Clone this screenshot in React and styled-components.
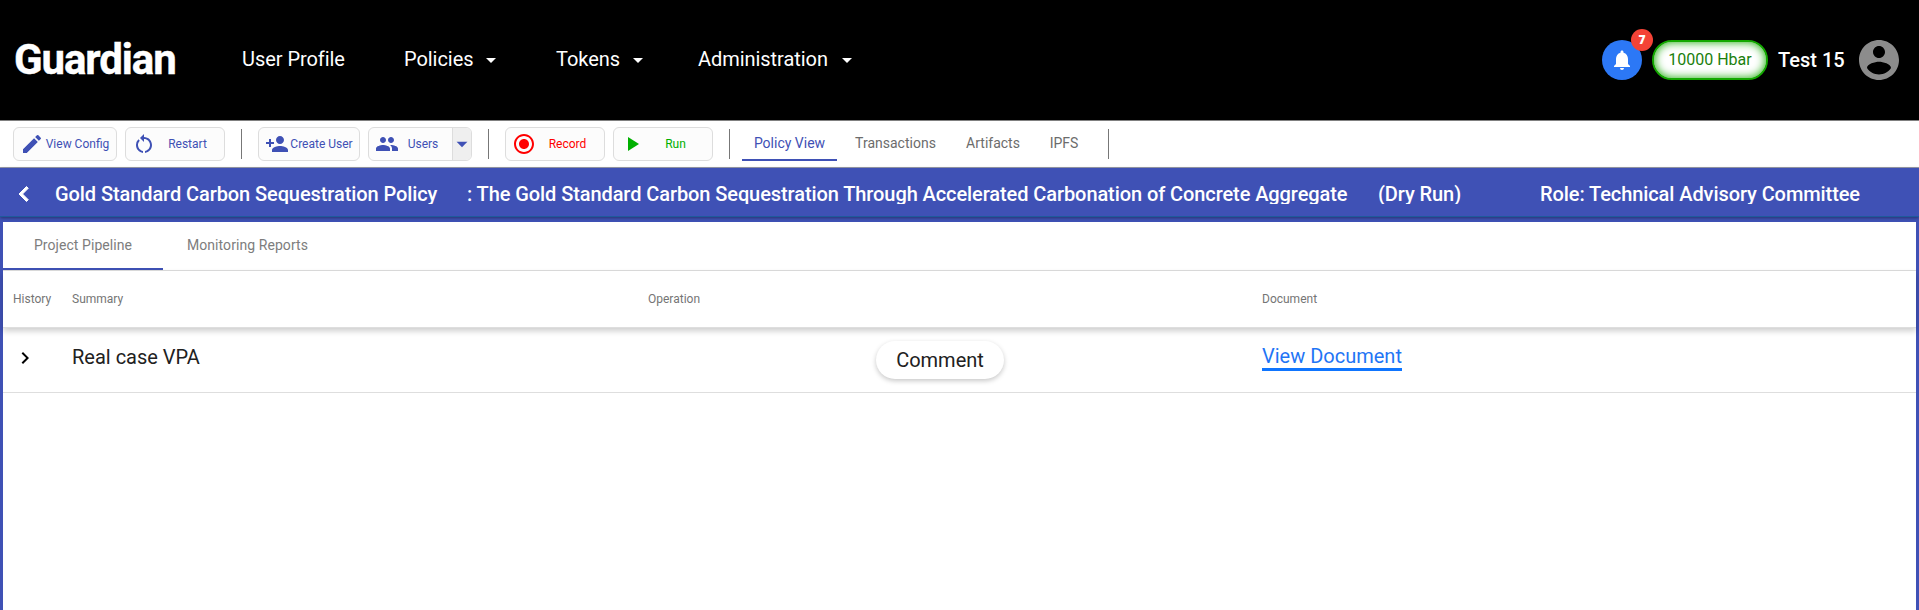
import React from "react";
import styled, { createGlobalStyle, css } from "styled-components";
import {
  MdEdit, MdRestartAlt, MdPersonAdd, MdGroup, MdRadioButtonChecked, MdPlayArrow,
  MdArrowDropDown, MdChevronLeft, MdChevronRight, MdNotifications,
} from "react-icons/md";

const indigo = "#3f51b5";

const GlobalStyle = createGlobalStyle`
  *, *::before, *::after { box-sizing: border-box; }
  body { margin: 0; background: #fff; font-family: Roboto, "Liberation Sans", sans-serif; overflow: hidden; }
  button { font-family: inherit; }
  svg { display: block; flex: none; }
`;

const Page = styled.div`
  display: flex;
  flex-direction: column;
  height: 610px;
`;

const Header = styled.header`
  display: flex;
  align-items: center;
  height: 120px;
  padding: 0 20px 0 14px;
  background: #000;
  color: #fff;
`;

const Logo = styled.div`
  width: 228px;
  padding-bottom: 1px;
  font-size: 42px;
  font-weight: 700;
  letter-spacing: -1.1px;
  line-height: 50px;
  -webkit-text-stroke: 0.4px #fff;
`;

const Nav = styled.nav`
  display: flex;
  flex: 1;
`;

const NavItem = styled.a`
  display: flex;
  align-items: center;
  justify-content: space-between;
  width: ${(p) => p.$width}px;
  margin-right: ${(p) => p.$after}px;
  font-size: 20px;
  line-height: 24px;
  letter-spacing: -0.05px;
  white-space: nowrap;
`;

const NavLabel = styled.span`
  padding-bottom: 2px;
`;

const Account = styled.div`
  display: flex;
  align-items: center;
`;

const Bell = styled.div`
  position: relative;
  display: flex;
  align-items: center;
  justify-content: center;
  width: 40px;
  height: 40px;
  margin-right: 10px;
  border-radius: 50%;
  background: #2c78f6;
`;

const Badge = styled.span`
  position: absolute;
  top: -11px;
  right: -11px;
  width: 22px;
  height: 22px;
  border-radius: 50%;
  background: #f44336;
  font-family: "Open Sans", Roboto, sans-serif;
  font-size: 12px;
  font-weight: 800;
  line-height: 22px;
  text-align: center;
`;

const Balance = styled.div`
  width: 116px;
  height: 40px;
  margin-right: 10px;
  border: 2px solid #13a800;
  border-radius: 20px;
  background: #fff;
  box-shadow: inset 0 0 10px 0 #13a800;
  color: #1a7f0c;
  font-size: 16px;
  line-height: 35px;
  text-align: center;
`;

const UserName = styled.div`
  width: 77px;
  font-size: 20px;
  font-weight: 500;
  line-height: 24px;
  white-space: nowrap;
`;

const Avatar = styled.div`
  display: flex;
  align-items: center;
  justify-content: center;
  width: 48px;
  height: 48px;
  margin-right: -4px;
  color: #8c8c8c;
`;

const Toolbar = styled.div`
  display: flex;
  align-items: center;
  height: 48px;
  padding-left: 13px;
  border-top: 1px solid #808080;
  border-bottom: 1px solid #9a9dac;
`;

const ToolButton = styled.button`
  display: flex;
  align-items: center;
  width: ${(p) => p.$width}px;
  height: 34px;
  margin-right: 8px;
  padding: 0 0 0 6px;
  border: 1px solid #ddd;
  border-radius: 6px;
  background: #fcfcfc;
  color: ${(p) => p.$color || indigo};
  font-size: 12px;
  overflow: hidden;
`;

const ToolLabel = styled.span`
  flex: 1;
  padding-right: 5px;
  text-align: center;
  white-space: nowrap;
`;

const SplitArrow = styled.span`
  display: flex;
  align-items: center;
  justify-content: center;
  width: 19px;
  height: 32px;
  border-left: 1px solid #ddd;
  background: #efefef;
`;

const ToolDivider = styled.div`
  width: 1px;
  height: 30px;
  margin: 0 ${(p) => p.$after ?? 16}px 0 ${(p) => p.$before ?? 8}px;
  background: #777;
`;

const ViewTabs = styled.div`
  display: flex;
  height: 34px;
`;

const ViewTab = styled.a`
  width: ${(p) => p.$width}px;
  height: 34px;
  padding-bottom: 2px;
  color: #6c6c6c;
  font-size: 14px;
  line-height: 32px;
  text-align: center;
  white-space: nowrap;
  ${(p) => p.$active && css`
    padding-bottom: 0;
    border-bottom: 2px solid ${indigo};
    color: ${indigo};
  `}
`;

const TitleBar = styled.div`
  position: relative;
  display: flex;
  align-items: center;
  height: 49px;
  padding-left: 9px;
  border-bottom: 1px solid #1e5a9c;
  background: ${indigo};
  box-shadow: 0 1px 3px rgba(0, 0, 0, 0.4);
  color: #fff;
`;

const TitleText = styled.span`
  width: ${(p) => p.$width}px;
  height: 20px;
  margin-top: 4px;
  overflow: hidden;
  font-size: 20px;
  font-weight: 500;
  line-height: 20px;
  letter-spacing: -0.085px;
  white-space: nowrap;
`;

const Back = styled.span`
  width: 46px;
  margin-top: 3px;

  path:last-child {
    stroke: #fff;
    stroke-width: 0.8px;
  }
`;

const Workspace = styled.main`
  display: flex;
  flex-direction: column;
  flex: 1;
  border: 3px solid ${indigo};
  border-top-width: 5px;
  border-bottom: 0;
  background: #fff;
`;

const TabStrip = styled.div`
  display: flex;
  height: 49px;
  border-bottom: 1px solid #dedede;
`;

const Tab = styled.a`
  width: ${(p) => p.$width}px;
  height: 48px;
  border-bottom: 2px solid ${(p) => (p.$active ? indigo : "transparent")};
  color: #7d7d7d;
  font-size: 14px;
  letter-spacing: 0.07px;
  line-height: 46px;
  text-align: center;
`;

const Row = styled.div`
  display: grid;
  grid-template-columns: 59px 576px 614px 1fr;
  align-items: center;
  height: 65px;
  padding-left: 10px;
  border-bottom: 1px solid #dedede;
  color: #212121;
  font-size: 20px;
`;

const HeadRow = styled(Row)`
  height: 57px;
  color: #757575;
  font-size: 12px;
  box-shadow: 0 3px 6px rgba(0, 0, 0, 0.2);
`;

const Expand = styled.span`
  padding-bottom: 4px;
  color: #000;
`;

const Summary = styled.span`
  padding-bottom: 7px;
`;

const CommentCell = styled.div`
  display: flex;
  padding-left: 228px;
`;

const CommentButton = styled.button`
  width: 128px;
  height: 38px;
  padding: 0 0 1px;
  border: 0;
  border-radius: 19px;
  background: #fff;
  box-shadow: 0 2px 5px rgba(0, 0, 0, 0.22);
  color: #212121;
  font-size: 20px;
`;

const DocumentLink = styled.a`
  justify-self: start;
  height: 27px;
  margin-bottom: 5px;
  border-bottom: 3px solid #0f75ff;
  color: #1f75f5;
  line-height: 24px;
`;

function PersonCircle() {
  return (
    <svg width="48" height="48" viewBox="0 0 24 24" fill="currentColor">
      <path d="M12 2C6.48 2 2 6.48 2 12s4.48 10 10 10 10-4.48 10-10S17.52 2 12 2zm0 3c1.66 0 3 1.34 3 3s-1.34 3-3 3-3-1.34-3-3 1.34-3 3-3zm0 14.2c-2.5 0-4.71-1.28-6-3.22.03-1.99 4-3.08 6-3.08 1.99 0 5.97 1.09 6 3.08-1.29 1.94-3.5 3.22-6 3.22z" />
    </svg>
  );
}

export default function App() {
  return (
    <>
      <GlobalStyle />
      <Page>
        <Header>
          <Logo>Guardian</Logo>
          <Nav>
            <NavItem $width={104} $after={58}><NavLabel>User Profile</NavLabel></NavItem>
            <NavItem $width={99} $after={53}><NavLabel>Policies</NavLabel><MdArrowDropDown size={24} /></NavItem>
            <NavItem $width={94} $after={48}><NavLabel>Tokens</NavLabel><MdArrowDropDown size={24} /></NavItem>
            <NavItem $width={161} $after={0}><NavLabel>Administration</NavLabel><MdArrowDropDown size={24} /></NavItem>
          </Nav>
          <Account>
            <Bell><MdNotifications size={24} /><Badge>7</Badge></Bell>
            <Balance>10000 Hbar</Balance>
            <UserName>Test 15</UserName>
            <Avatar><PersonCircle /></Avatar>
          </Account>
        </Header>
        <Toolbar>
          <ToolButton $width={104}><MdEdit size={24} /><ToolLabel>View Config</ToolLabel></ToolButton>
          <ToolButton $width={100}><MdRestartAlt size={24} /><ToolLabel>Restart</ToolLabel></ToolButton>
          <ToolDivider />
          <ToolButton $width={102}><MdPersonAdd size={24} /><ToolLabel>Create User</ToolLabel></ToolButton>
          <ToolButton $width={104}>
            <MdGroup size={24} /><ToolLabel>Users</ToolLabel>
            <SplitArrow><MdArrowDropDown size={26} /></SplitArrow>
          </ToolButton>
          <ToolDivider />
          <ToolButton $width={100} $color="#f00"><MdRadioButtonChecked size={24} /><ToolLabel>Record</ToolLabel></ToolButton>
          <ToolButton $width={100} $color="#00b000"><MdPlayArrow size={24} /><ToolLabel>Run</ToolLabel></ToolButton>
          <ToolDivider $after={12} />
          <ViewTabs>
            <ViewTab $width={95} $active>Policy View</ViewTab>
            <ViewTab $width={117}>Transactions</ViewTab>
            <ViewTab $width={78}>Artifacts</ViewTab>
            <ViewTab $width={64}>IPFS</ViewTab>
          </ViewTabs>
          <ToolDivider $before={12} />
        </Toolbar>
        <TitleBar>
          <Back><MdChevronLeft size={30} /></Back>
          <TitleText $width={412}>Gold Standard Carbon Sequestration Policy</TitleText>
          <TitleText $width={911}>: The Gold Standard Carbon Sequestration Through Accelerated Carbonation of Concrete Aggregate</TitleText>
          <TitleText $width={162}>(Dry Run)</TitleText>
          <TitleText $width={330}>Role: Technical Advisory Committee</TitleText>
        </TitleBar>
        <Workspace>
          <TabStrip>
            <Tab $width={160} $active>Project Pipeline</Tab>
            <Tab $width={169}>Monitoring Reports</Tab>
          </TabStrip>
          <HeadRow>
            <span>History</span><span>Summary</span><span>Operation</span><span>Document</span>
          </HeadRow>
          <Row>
            <Expand><MdChevronRight size={24} /></Expand>
            <Summary>Real case VPA</Summary>
            <CommentCell><CommentButton>Comment</CommentButton></CommentCell>
            <DocumentLink>View Document</DocumentLink>
          </Row>
        </Workspace>
      </Page>
    </>
  );
}
